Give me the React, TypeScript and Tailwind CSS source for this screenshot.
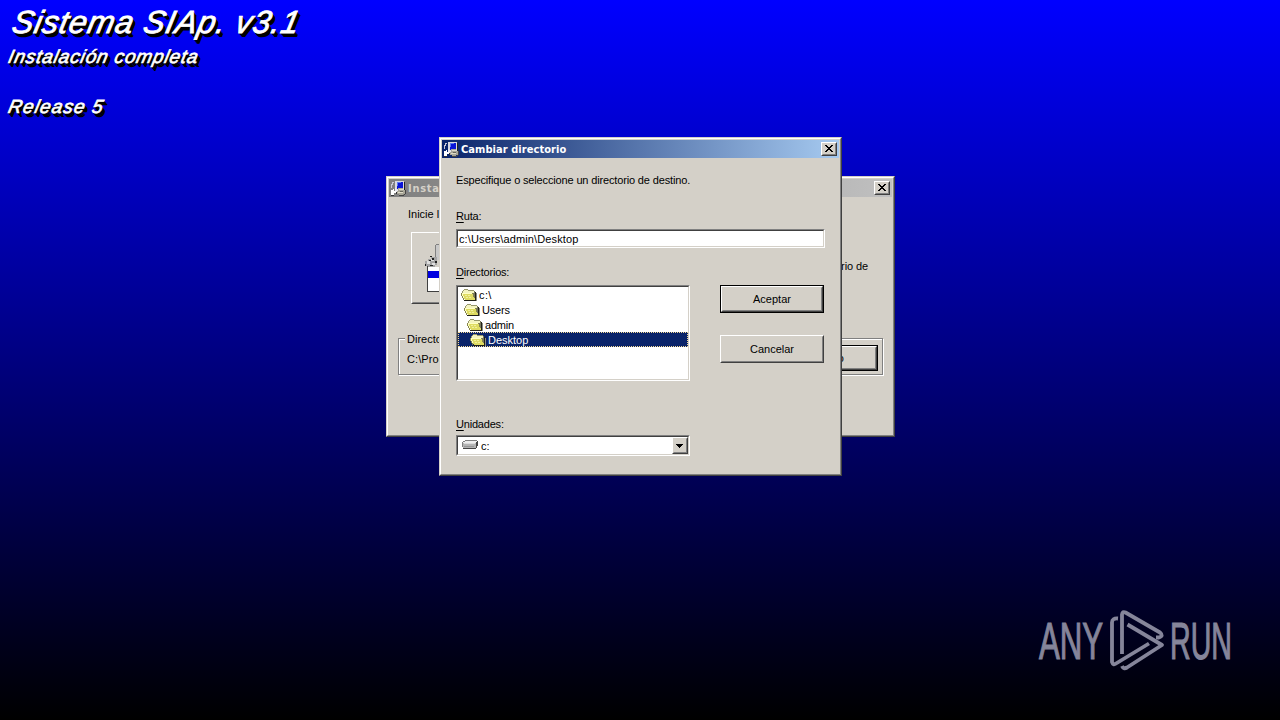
import type { ReactNode } from "react";

const FRAME =
  "border border-t-[#d4d0c8] border-l-[#d4d0c8] border-r-[#404040] border-b-[#404040] bg-[#d4d0c8]";
const FRAME_INNER =
  "h-full border border-t-white border-l-white border-r-[#808080] border-b-[#808080] p-px flex flex-col";
const SUNKEN =
  "border border-t-[#808080] border-l-[#808080] border-r-white border-b-white bg-white";
const SUNKEN_INNER =
  "h-full border border-t-[#404040] border-l-[#404040] border-r-[#d4d0c8] border-b-[#d4d0c8]";
const RAISED =
  "border border-t-white border-l-white border-r-[#404040] border-b-[#404040] bg-[#d4d0c8]";
const RAISED_INNER =
  "h-full border border-t-[#d4d0c8] border-l-[#d4d0c8] border-r-[#808080] border-b-[#808080]";

function SetupIcon() {
  return (
    <svg width="16" height="16" viewBox="0 0 16 16" shapeRendering="crispEdges" className="shrink-0">
      <path d="M5 1h9v9H5z" fill="#d8d8e0" />
      <path d="M14 2h1v9h-1zM6 10h8v1H6z" fill="#222" />
      <path d="M7 2h6v7H7z" fill="#0a14d8" />
      <path d="M7 2h4v1H8v3H7z" fill="#5a78f0" />
      <path d="M2 2h2v1H3v2H2v3H1V4h1z" fill="#c8c8d8" />
      <path d="M1 10h2V9h1v2h2v2H4v2H1z" fill="#fff" />
      <path d="M5 8h1v1h1v1h1v1H7v1H6v-1H5z" fill="#e8e8f0" />
      <path d="M1 15h3v1H1zM6 12h1v2H6z" fill="#333" />
      <path d="M8 8h5v2h2v4h-2v1H9v-1H7v-3h1z" fill="#a8a698" />
      <path d="M9 9h4v1H9zM8 12h5v1H8z" fill="#dedbc8" />
      <path d="M9 15h5v-1h1v1h-1v1H9zM15 10h1v4h-1z" fill="#444" />
      <path d="M10 11h3v1h-3z" fill="#66665c" />
    </svg>
  );
}

function FolderIcon() {
  return (
    <svg width="16" height="13" viewBox="0 0 16 13" shapeRendering="crispEdges" className="shrink-0">
      <path d="M2 2h5v1h6v3H2z" fill="#f4f4c0" />
      <path d="M3 1h4v1H3zM2 2h1v1H2zM1 3h1v2H1zM7 2h6v1H7z" fill="#98986c" />
      <path d="M1 5h10v1h1v2h1v2h1v2H4v-1H3V9H2V8H1z" fill="#dedb62" />
      <path d="M1 5h10v1H1zM1 6h1v2H1zM2 8h1v2H2z" fill="#ffffc4" />
      <path d="M4 7h2v1H4zM7 7h2v1H7zM5 9h2v1H5zM8 9h2v1H8z" fill="#f2f09a" />
      <path d="M0 5h1v3H0zM1 8h1v2H1zM2 10h1v2H2zM11 5h1v1h-1zM12 7h1v2h-1z" fill="#85854c" />
      <path d="M3 12h12v1H3zM14 4h1v8h-1z" fill="#222218" />
      <path d="M13 3h1v7h-1zM12 5h1v2h-1z" fill="#77775c" />
      <path d="M15 5h1v8h-1z" fill="#8c8c84" />
    </svg>
  );
}

function DriveIcon() {
  return (
    <svg width="16" height="10" viewBox="0 0 16 10" shapeRendering="crispEdges" className="shrink-0">
      <path d="M3 0h12v1H3zM1 1h2v1H1zM0 2h1v5H0z" fill="#808080" />
      <path d="M3 1h12v1h-1v1H1V2h2z" fill="#eee" />
      <path d="M1 3h13v5H1z" fill="#b4b4b4" />
      <path d="M2 3h11v1H2z" fill="#dcdcdc" />
      <path d="M2 6h10v1H2z" fill="#969696" />
      <path d="M1 8h13v1H1zM14 2h1v6h-1zM15 1h1v5h-1z" fill="#444" />
    </svg>
  );
}

function InstallerPicture() {
  return (
    <svg width="32" height="48" viewBox="0 0 32 48" shapeRendering="crispEdges" className="shrink-0">
      <path d="M11 0h16v16H11z" fill="#c8c8c8" />
      <path d="M10 1h1v12h-1zM11 0h16v1H11z" fill="#808080" />
      <path d="M3 15h3v-2h6v8h-2v2H2v-1H0v-5h3z" fill="#a4a4a4" />
      <path d="M6 15h3v2H6zM2 17h3v3H2zM7 19h3v2H7z" fill="#dedede" />
      <path d="M5 12h2v1H5zM7 14h2v2H7zM10 17h2v2h-2zM0 20h1v2H0zM4 16h2v1H4zM5 21h3v1H5z" fill="#222" />
      <path d="M3 23h12v24H3z" fill="#fff" />
      <path d="M3 27h12v7H3z" fill="#0000e0" />
      <path d="M2 22h1v25H2zM2 47h13v1H2z" fill="#404040" />
    </svg>
  );
}

function CloseButton() {
  return (
    <div className={`h-[14px] w-4 ${RAISED}`}>
      <div className={`flex items-start justify-center pt-px ${RAISED_INNER}`}>
        <svg width="8" height="7" viewBox="0 0 8 7" shapeRendering="crispEdges">
          <path
            d="M0 0h2v1h1v1h2V1h1V0h2v1H7v1H6v1H5v1h1v1h1v1h1v1H6V6H5V5H3v1H2v1H0V6h1V5h1V4h1V3H2V2H1V1H0z"
            fill="#000"
          />
        </svg>
      </div>
    </div>
  );
}

function Dialog({
  title,
  place,
  bar,
  titleColor,
  children,
}: {
  title: string;
  place: string;
  bar: string;
  titleColor: string;
  children: ReactNode;
}) {
  return (
    <div className={`absolute ${place} ${FRAME}`}>
      <div className={FRAME_INNER}>
        <div className={`flex h-[18px] shrink-0 items-center pr-[2px] pl-px ${bar}`}>
          <SetupIcon />
          <span
            className={`ml-[2px] flex-1 pt-px font-['DejaVu_Sans_Condensed','DejaVu_Sans',sans-serif] text-[11px] leading-[17px] font-bold whitespace-nowrap ${titleColor}`}
          >
            {title}
          </span>
          <CloseButton />
        </div>
        {children}
      </div>
    </div>
  );
}

function PushButton({ label, primary = false }: { label: string; primary?: boolean }) {
  return (
    <div className={primary ? "h-7 w-[104px] border border-black" : "h-7 w-[104px]"}>
      <div className={`h-full ${RAISED}`}>
        <div className={`flex items-center justify-center ${RAISED_INNER}`}>{label}</div>
      </div>
    </div>
  );
}

function FieldLabel({ hotkey, rest }: { hotkey: string; rest: string }) {
  return (
    <div className="leading-[13px] tracking-[-0.2px]">
      <span className="underline decoration-1 underline-offset-2">{hotkey}</span>
      {rest}
    </div>
  );
}

const folders = [
  { name: "c:\\", indent: "pl-[3px]", tracking: "tracking-[0.4px]", selected: false },
  { name: "Users", indent: "pl-[6px]", tracking: "tracking-[-0.2px]", selected: false },
  { name: "admin", indent: "pl-[9px]", tracking: "tracking-[-0.2px]", selected: false },
  { name: "Desktop", indent: "pl-[12px]", tracking: "tracking-normal", selected: true },
];

const HEADLINE =
  "text-white italic origin-bottom-left -skew-x-12 [text-shadow:1px_1px_0_#000,2px_2px_0_#000,3px_3px_0_#000,4px_4px_0_#000]";

export default function App() {
  return (
    <div className="relative h-[720px] w-[1280px] overflow-hidden bg-linear-to-b/srgb from-[#0000ff] to-black font-['Liberation_Sans',Arial,sans-serif] text-[11px] leading-[13px] whitespace-nowrap text-black">
      <header className="flex flex-col items-start pl-[6px]">
        <h1
          className={`mt-1 ml-[3px] text-[32px] leading-9 tracking-[0.85px] [-webkit-text-stroke:0.8px_#fff] ${HEADLINE}`}
        >
          Sistema SIAp. v3.1
        </h1>
        <h2
          className={`mt-[5px] text-[19px] leading-6 tracking-[0.85px] [-webkit-text-stroke:0.7px_#fff] ${HEADLINE}`}
        >
          Instalación completa
        </h2>
        <h2
          className={`mt-[26px] text-[19px] leading-6 tracking-[1.1px] [-webkit-text-stroke:0.7px_#fff] ${HEADLINE}`}
        >
          Release 5
        </h2>
      </header>

      <Dialog
        title="Instalación"
        place="left-[386px] top-[176px] h-[261px] w-[509px]"
        bar="bg-linear-to-r/srgb from-[#808080] to-[#c0c0c0] tracking-[0.7px]"
        titleColor="text-[#d4d0c8]"
      >
        <div className="flex flex-1 flex-col px-[9px] pt-[11px]">
          <div className="pl-[10px]">Inicie la instalación</div>
          <div className="mt-[11px] flex h-[72px] items-center justify-between pr-[15px] pl-[13px]">
            <div className={`h-[72px] w-[72px] ${RAISED}`}>
              <div className={`flex items-center pl-3 ${RAISED_INNER}`}>
                <InstallerPicture />
              </div>
            </div>
            <div className="-mt-1 tracking-[-0.1px]">directorio de</div>
          </div>
          <div className="mt-[34px] h-[37px] border border-[#808080] shadow-[inset_1px_1px_0_#fff,1px_1px_0_#fff]">
            <div className="flex justify-between">
              <div className="-mt-[6px] ml-[6px] flex flex-col gap-[7px]">
                <div className="bg-[#d4d0c8] px-[2px]">Directorio:</div>
                <div className="px-[2px] tracking-[0.1px]">C:\Program Files</div>
              </div>
              <div className="mt-[6px] mr-1 h-[26px] w-[130px] border border-black">
                <div className={`h-full ${RAISED}`}>
                  <div className={`flex items-center justify-end pr-[31px] ${RAISED_INNER}`}>Directorio</div>
                </div>
              </div>
            </div>
          </div>
        </div>
      </Dialog>

      <Dialog
        title="Cambiar directorio"
        place="left-[439px] top-[137px] h-[339px] w-[403px]"
        bar="bg-linear-to-r/srgb from-[#0a246a] to-[#a6caf0] tracking-[0.06px]"
        titleColor="text-white"
      >
        <div className="flex flex-1 flex-col pt-4 pr-[14px] pl-[14px]">
          <div className="tracking-[-0.15px]">Especifique o seleccione un directorio de destino.</div>
          <div className="mt-[23px]">
            <FieldLabel hotkey="R" rest="uta:" />
          </div>
          <div className={`mt-[6px] h-[19px] w-[369px] ${SUNKEN}`}>
            <div className={`flex items-center pt-px pl-px tracking-[0.12px] ${SUNKEN_INNER}`}>
              c:\Users\admin\Desktop
            </div>
          </div>
          <div className="mt-[18px]">
            <FieldLabel hotkey="D" rest="irectorios:" />
          </div>
          <div className="mt-[6px] flex gap-[30px]">
            <div className={`h-24 w-[234px] ${SUNKEN}`}>
              <div className={SUNKEN_INNER}>
                {folders.map((folder) => (
                  <div
                    key={folder.name}
                    className={`flex h-[15px] items-center gap-[2px] ${folder.indent} ${folder.tracking} ${
                      folder.selected
                        ? "bg-[#0a246a] text-white outline-1 -outline-offset-1 outline-[#f5db95] outline-dotted"
                        : ""
                    }`}
                  >
                    <FolderIcon />
                    <span className="pt-px">{folder.name}</span>
                  </div>
                ))}
              </div>
            </div>
            <div className="flex flex-col gap-[22px]">
              <PushButton label="Aceptar" primary />
              <PushButton label="Cancelar" />
            </div>
          </div>
          <div className="mt-[37px]">
            <FieldLabel hotkey="U" rest="nidades:" />
          </div>
          <div className={`mt-1 h-[21px] w-[234px] ${SUNKEN}`}>
            <div className={`flex ${SUNKEN_INNER}`}>
              <div className="flex flex-1 items-center gap-[3px] pl-1">
                <div className="-mt-[2px]">
                  <DriveIcon />
                </div>
                <span className="pt-px">c:</span>
              </div>
              <div className={`w-4 ${RAISED}`}>
                <div className={`flex items-start pt-[5px] pl-[2px] ${RAISED_INNER}`}>
                  <svg width="7" height="4" viewBox="0 0 7 4" shapeRendering="crispEdges">
                    <path d="M0 0h7v1H6v1H5v1H4v1H3V3H2V2H1V1H0z" fill="#000" />
                  </svg>
                </div>
              </div>
            </div>
          </div>
        </div>
      </Dialog>

      <div className="absolute top-[609px] left-[1039px] flex h-16 w-[194px] items-center text-[52px] leading-[64px] text-[#85859a]">
        <div className="w-[67px]">
          <span className="inline-block origin-left scale-x-[0.6] [-webkit-text-stroke:1.2px_#85859a]">ANY</span>
        </div>
        <svg
          width="60"
          height="64"
          viewBox="0 0 60 64"
          fill="none"
          stroke="#85859a"
          strokeWidth="3.8"
          strokeLinejoin="round"
          className="shrink-0"
        >
          <path d="M16 45V5.500Q16.500 2 19.500 3.500L54 23.500Q58 27 53 28.500H50" />
          <path d="M21.500 15.500L56 36L21 58.500Q17.500 60.500 16 57" />
          <path d="M12 9.500Q6 9 6 13.500V53Q7 56.500 10 54.500L43 34.500" />
        </svg>
        <div className="w-[66px] pl-1">
          <span className="inline-block origin-left scale-x-[0.55] [-webkit-text-stroke:1.2px_#85859a]">RUN</span>
        </div>
      </div>
    </div>
  );
}
